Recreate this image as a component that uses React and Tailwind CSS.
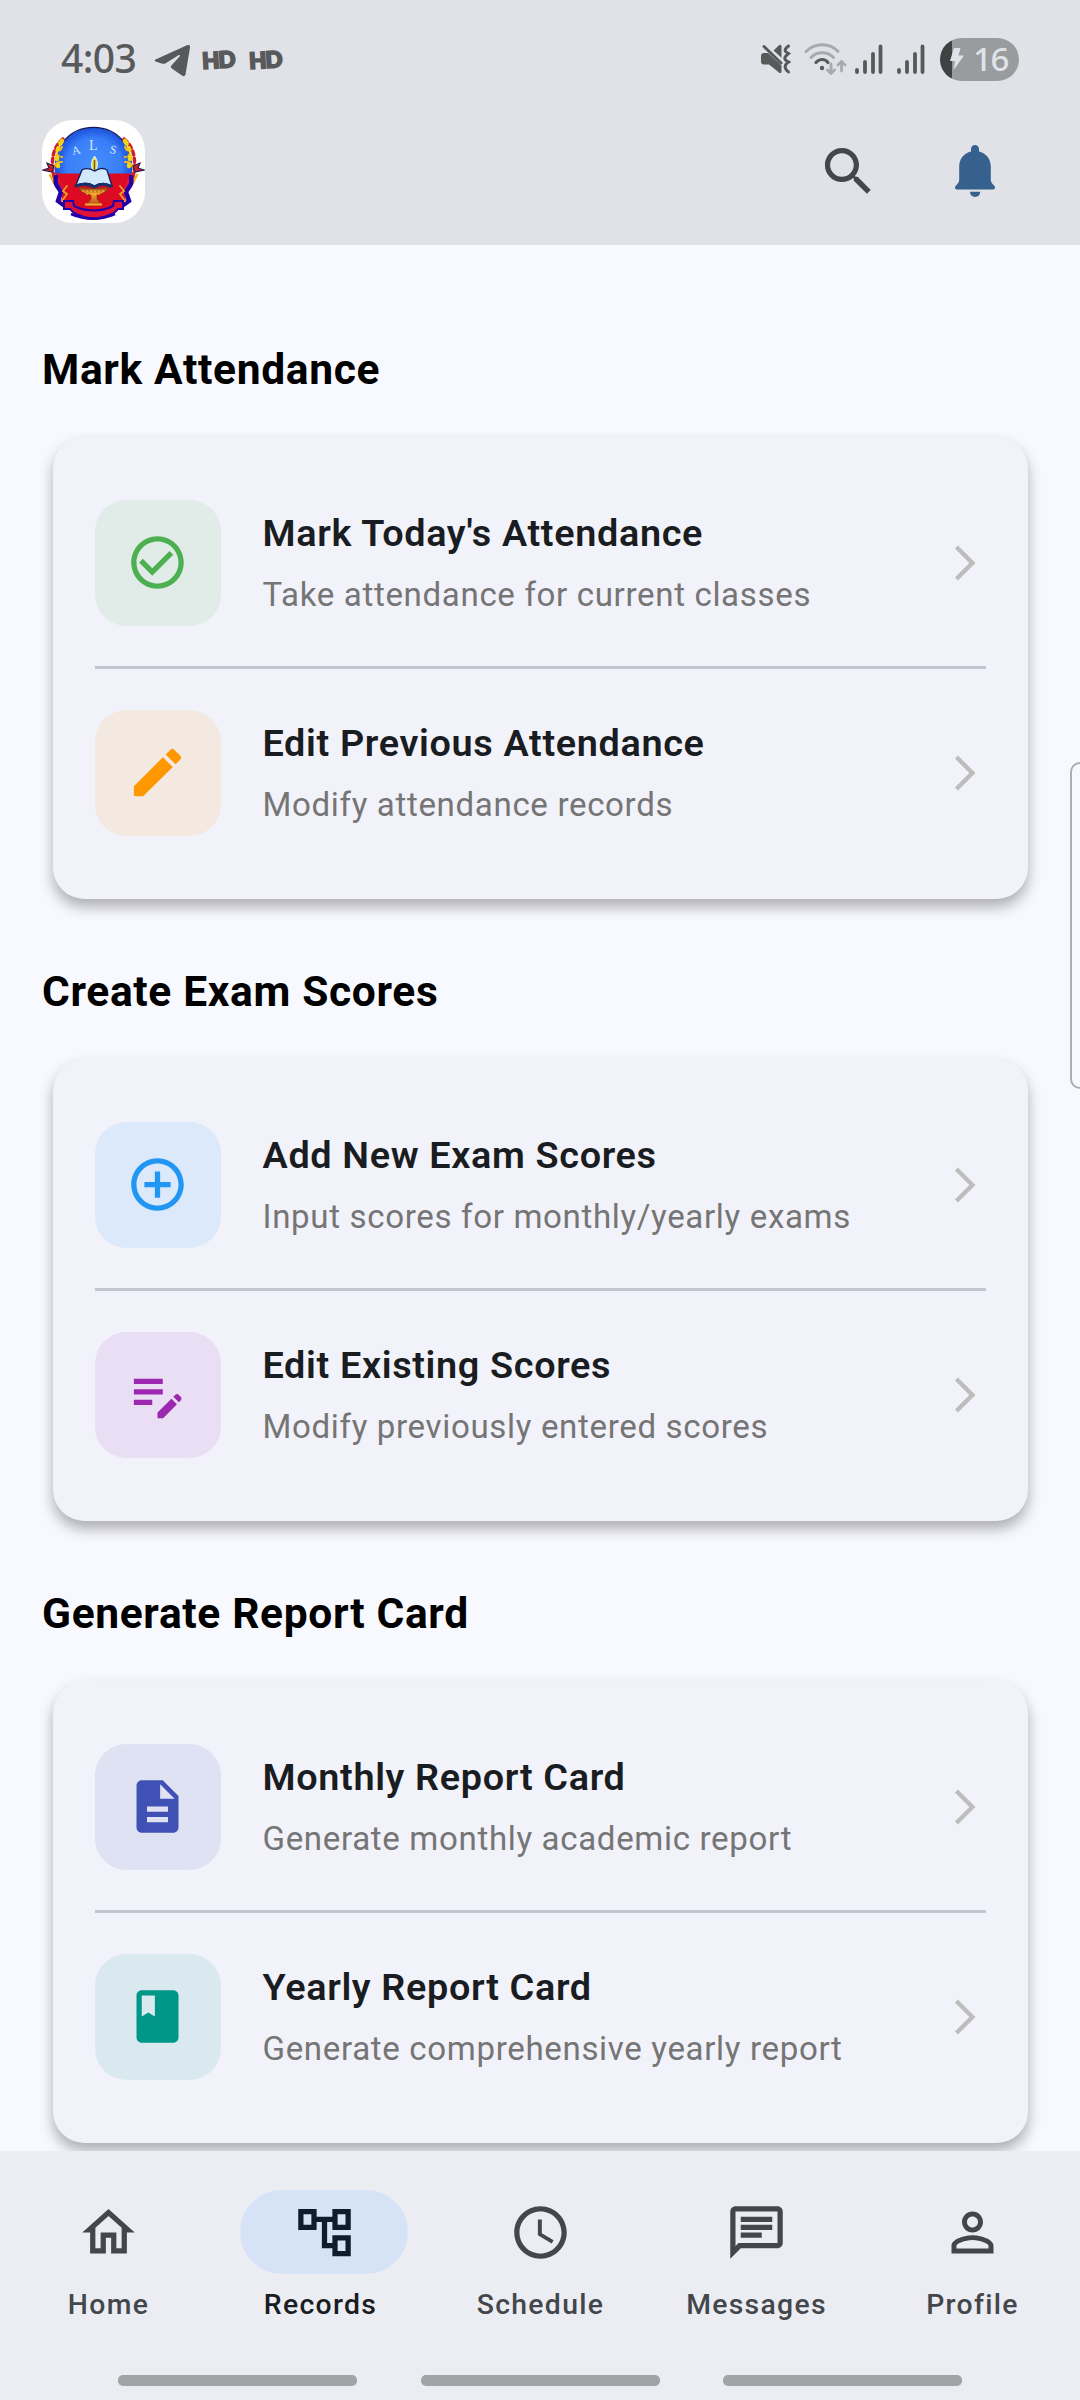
const FONT = "font-['Roboto','Liberation_Sans',sans-serif]";

const PATHS = {
  check:
    'M16.59 7.58 10 14.17l-3.59-3.58L5 12l5 5 8-8zM12 2C6.48 2 2 6.48 2 12s4.48 10 10 10 10-4.48 10-10S17.52 2 12 2m0 18c-4.42 0-8-3.58-8-8s3.58-8 8-8 8 3.58 8 8-3.58 8-8 8',
  pencil:
    'M3 17.46v3.04c0 .28.22.5.5.5h3.04L17.81 9.94l-3.75-3.75L3 17.25zM20.71 7.04c.39-.39.39-1.02 0-1.41l-2.34-2.34a.996.996 0 0 0-1.41 0l-1.83 1.83 3.75 3.75z',
  plus:
    'M13 7h-2v4H7v2h4v4h2v-4h4v-2h-4zm-1-5C6.48 2 2 6.48 2 12s4.48 10 10 10 10-4.48 10-10S17.52 2 12 2m0 18c-4.41 0-8-3.59-8-8s3.59-8 8-8 8 3.59 8 8-3.59 8-8 8',
  editNote:
    'M3 10h11v2H3zm0-2h11V6H3zm0 8h7v-2H3zm15.01-3.13.71-.71a.996.996 0 0 1 1.41 0l.71.71c.39.39.39 1.02 0 1.41l-.71.71zm-.71.71-5.3 5.3V21h2.12l5.3-5.3z',
  file:
    'M14 2H6c-1.1 0-1.99.9-1.99 2L4 20c0 1.1.89 2 1.99 2H18c1.1 0 2-.9 2-2V8zm2 16H8v-2h8zm0-4H8v-2h8zm-3-5V3.5L18.5 9z',
  book: 'M18 2H6c-1.1 0-2 .9-2 2v16c0 1.1.9 2 2 2h12c1.1 0 2-.9 2-2V4c0-1.1-.9-2-2-2M6 4h5v8l-2.5-1.5L6 12z',
  search:
    'M15.5 14h-.79l-.28-.27C15.41 12.59 16 11.11 16 9.5 16 5.91 13.09 3 9.5 3S3 5.91 3 9.5 5.91 16 9.5 16c1.61 0 3.09-.59 4.23-1.57l.27.28v.79l5 4.99L20.49 19zm-6 0C7.01 14 5 11.99 5 9.5S7.01 5 9.5 5 14 7.01 14 9.5 11.99 14 9.5 14',
  chevron: 'M6.23 20.23 8 22l10-10L8 2 6.23 3.77 14.46 12z',
  home: 'm12 5.69 5 4.5V18h-2v-6H9v6H7v-7.81zM12 3 2 12h3v8h6v-6h2v6h6v-8h3z',
  tree: 'M22 11V3h-7v3H9V3H2v8h7V8h2v10h4v3h7v-8h-7v3h-2V8h2v3zM7 9H4V5h3zm10 6h3v4h-3zm0-10h3v4h-3z',
  clock:
    'M11.99 2C6.47 2 2 6.48 2 12s4.47 10 9.99 10C17.52 22 22 17.52 22 12S17.52 2 11.99 2M12 20c-4.42 0-8-3.58-8-8s3.58-8 8-8 8 3.58 8 8-3.58 8-8 8m.5-13H11v6l5.25 3.15.75-1.23-4.5-2.67z',
  message:
    'M4 4h16v12H5.17L4 17.17zm0-2c-1.1 0-1.99.9-1.99 2L2 22l4-4h14c1.1 0 2-.9 2-2V4c0-1.1-.9-2-2-2zm2 10h8v2H6zm0-3h12v2H6zm0-3h12v2H6z',
  person:
    'M12 5.9c1.16 0 2.1.94 2.1 2.1s-.94 2.1-2.1 2.1S9.9 9.16 9.9 8s.94-2.1 2.1-2.1m0 9c2.97 0 6.1 1.46 6.1 2.1v1.1H5.9V17c0-.64 3.13-2.1 6.1-2.1M12 4C9.79 4 8 5.79 8 8s1.79 4 4 4 4-1.79 4-4-1.79-4-4-4m0 9c-2.67 0-8 1.34-8 4v3h16v-3c0-2.66-5.33-4-8-4',
};

function Icon({ name, className }) {
  return (
    <svg viewBox="0 0 24 24" fill="currentColor" className={className}>
      <path d={PATHS[name]} />
    </svg>
  );
}

const SECTIONS = [
  {
    title: 'Mark Attendance',
    rows: [
      { icon: 'check', tile: 'bg-[#e1ebe8] text-[#4caf50]', title: "Mark Today's Attendance", text: 'Take attendance for current classes' },
      { icon: 'pencil', tile: 'bg-[#f3e9e1] text-[#ff9800]', title: 'Edit Previous Attendance', text: 'Modify attendance records' },
    ],
  },
  {
    title: 'Create Exam Scores',
    rows: [
      { icon: 'plus', tile: 'bg-[#dce9fa] text-[#2196f3]', title: 'Add New Exam Scores', text: 'Input scores for monthly/yearly exams' },
      { icon: 'editNote', tile: 'bg-[#e9def3] text-[#9c27b0]', title: 'Edit Existing Scores', text: 'Modify previously entered scores' },
    ],
  },
  {
    title: 'Generate Report Card',
    rows: [
      { icon: 'file', tile: 'bg-[#dfe2f3] text-[#3f51b5]', title: 'Monthly Report Card', text: 'Generate monthly academic report' },
      { icon: 'book', tile: 'bg-[#dae9f0] text-[#009688]', title: 'Yearly Report Card', text: 'Generate comprehensive yearly report' },
    ],
  },
];

const TABS = [
  { icon: 'home', label: 'Home' },
  { icon: 'tree', label: 'Records', active: true },
  { icon: 'clock', label: 'Schedule' },
  { icon: 'message', label: 'Messages' },
  { icon: 'person', label: 'Profile' },
];

function Signal({ className }) {
  return (
    <svg viewBox="0 0 28 30" className={className} stroke="#58595b" strokeWidth="3.8" strokeLinecap="round">
      <path d="M2 26v2M10 18v10M18 10v18M25.5 2.5v25.5" />
    </svg>
  );
}

function HdBadge() {
  return (
    <span className="w-[35px] -rotate-3 font-['Lato',sans-serif] text-[22.5px] leading-none font-black tracking-[-1px] [-webkit-text-stroke:1.8px_#58595b]">
      HD
    </span>
  );
}

function StatusBar() {
  return (
    <div className="flex h-[98px] items-center pt-[20px] pr-[61px] pl-[61px] text-[#58595b]">
      <span className="mb-[4px] w-[78px] font-['Noto_Sans',sans-serif] text-[39px] leading-none font-medium tracking-[-0.6px]">4:03</span>
      <svg viewBox="0 0 36 33" className="mt-[3px] ml-[15px] h-[33px] w-[36px]" fill="#58595b">
        <path d="M1.5 15.5 33 1.2c2-.8 3.5.3 3 2.4L31.6 30c-.4 2.2-1.9 2.7-3.7 1.5l-10-7c-1.3-1-1.4-2.2-.3-3.3l8-8.8c.9-1.3-.2-1.9-1.5-1l-12 7.5c-1.8 1.1-3 1-4.5.5l-5.3-1.6c-2-.7-2-1.6-.8-2.3" />
      </svg>
      <div className="mt-[2px] ml-[12px] flex gap-[12px]">
        <HdBadge />
        <HdBadge />
      </div>

      <div className="ml-auto flex items-center">
        <svg viewBox="0 0 30 30" className="h-[30px] w-[30px]" fill="#58595b">
          <path d="M0 12a3 3 0 0 1 3-3h4l13.5 12.5v6c0 1.8-1.4 2-2.5 1L8 20.5H3a3 3 0 0 1-3-3z" />
          <path d="M12.5 6.5 18 1.3c1.2-1 2.5-.6 2.5 1v11.5z" />
          <path d="M3 2.5 20 19" stroke="#58595b" strokeWidth="3" strokeLinecap="round" />
          <path d="M27.5 2c-4.5 3.5-4.5 5 0 7.5-5 4-5 6 0 8.5-4.5 3-4.5 6 0 10" fill="none" stroke="#58595b" strokeWidth="3" strokeLinecap="round" />
        </svg>
        <svg viewBox="0 0 43 34" className="ml-[13px] h-[34px] w-[43px]" fill="none" strokeLinecap="round">
          <path d="M2 9.5C11 .5 26 .5 34 9.5" stroke="#a9aaae" strokeWidth="3" />
          <path d="M7 15.5c6-6.5 16.5-6.5 22.5 0" stroke="#a9aaae" strokeWidth="3" />
          <path d="M12 20.5c3.5-4 9-4 12 0" stroke="#58595b" strokeWidth="3.2" />
          <circle cx="18" cy="26" r="2.2" fill="#58595b" />
          <path d="M27 22v9.5m-3.5-3.5 3.5 3.5 3.5-3.5M37.5 29v-9.5M34 23l3.5-3.5L41 23" stroke="#a9aaae" strokeWidth="2.8" strokeLinejoin="round" />
        </svg>
        <Signal className="ml-[8px] h-[30px] w-[28px]" />
        <Signal className="ml-[14px] h-[30px] w-[28px]" />
        <div className="ml-[15px] flex h-[43px] w-[79px] items-center rounded-full bg-[linear-gradient(90deg,#404143_12px,#9a9b9f_12px)] text-[#e1e2e8]">
          <svg viewBox="0 0 14 22" className="ml-[10px] h-[22px] w-[14px] shrink-0" fill="currentColor">
            <path d="M4 0h6.5L8.5 7.5h5.500L3.500 22l1.500-9H0z" />
          </svg>
          <span className="mb-[2px] ml-[9px] font-['Noto_Sans',sans-serif] text-[33px] leading-none font-medium tracking-[-1.5px]">16</span>
        </div>
      </div>
    </div>
  );
}

function Garland() {
  return (
    <g strokeLinecap="round" fill="none">
      <path d="M21 19C12 26 8 38 12 57l8 13" stroke="#d01f2c" strokeWidth="3.5" strokeDasharray="4 3.5" />
      <path d="M20 21C15 28 14 38 16 46" stroke="#f3d316" strokeWidth="4.5" strokeDasharray="3 5" />
      <path d="M20 27l-4 7 4 3M17 42h3M8 55l4 8M14 44l-5 7" stroke="#f0b61c" strokeWidth="2.2" />
      <path d="M18 33l1 1" stroke="#2460d8" strokeWidth="4" />
      <path d="m1 50 6-2-2-5 7 3-2 6z" fill="#d01f2c" stroke="#2a1a4a" strokeWidth="1.2" />
      <path d="M14 57c-2 9 3 10 5 15l-3 9 7 5" stroke="#2400a8" strokeWidth="4.5" />
      <path d="M17 59c0 7 5 8 5 14l-2 8" stroke="#dc1440" strokeWidth="2" />
      <path d="m25 66-4 5 4 3-5 7 4 2" stroke="#f0a020" strokeWidth="1.8" />
    </g>
  );
}

function Logo() {
  return (
    <svg viewBox="0 0 103 103" className="h-[103px] w-[103px] rounded-[31px] bg-white">
      <defs>
        <radialGradient id="sky" gradientUnits="userSpaceOnUse" cx="52" cy="46" r="39">
          <stop offset="0" stopColor="#448ffb" />
          <stop offset="0.7" stopColor="#3a7ef8" />
          <stop offset="1" stopColor="#1a50da" />
        </radialGradient>
        <linearGradient id="bowl" x2="0" y2="1">
          <stop offset="0" stopColor="#8c3a10" />
          <stop offset="0.4" stopColor="#f4a62a" />
          <stop offset="1" stopColor="#b5461a" />
        </linearGradient>
        <clipPath id="disc">
          <circle cx="51.5" cy="46.5" r="39" />
        </clipPath>
      </defs>
      <path d="M17 54h69v8l-4 24-30 9-30-9-5-24z" fill="#dc0a22" />
      <g clipPath="url(#disc)">
        <rect width="103" height="54" fill="url(#sky)" />
        <rect y="53.5" width="103" height="50" fill="#dc0a22" />
      </g>
      <path d="M21 22a39 39 0 0 1 61 0" fill="none" stroke="#14185e" strokeWidth="1.3" />
      <g className="font-['Liberation_Serif',serif]" fill="#d4e6ff">
        <text x="29.5" y="34.5" fontSize="12" transform="rotate(-14 33 30)">A</text>
        <text x="47" y="30" fontSize="14">L</text>
        <text x="68" y="33.5" fontSize="12" transform="rotate(14 71 29)">S</text>
      </g>
      <path d="M52.5 36c4 6 3 8 2 14h-4c-2-6-1-9 2-14" fill="#e8e24a" stroke="#dff0ff" strokeWidth="1" />
      <path d="M52.5 40v10" stroke="#7a5a10" strokeWidth="1.5" />
      <path d="M40 50c5-3 9-1 12.5 1 4-2 8-4 12.5-1l5 16c-6-3-12-4-17.5 0-6-4-13-3-19 0z" fill="#d2e9fc" stroke="#15205e" strokeWidth="1.4" />
      <path d="M34 66c7-3 13-2 18.5 1 5-3 11-4 17 0" fill="none" stroke="#15306e" strokeWidth="3" />
      <path d="M37 67c10 2 20 2 29 0-1 5-6 7-11 8v4l5 6H44l5-6v-4c-6-1-11-3-12-8" fill="url(#bowl)" stroke="#8a3510" strokeWidth="0.8" />
      <path d="M43 84.5h17" stroke="#f0b030" strokeWidth="1.8" />
      <path d="M40 71h24M44 74h16" stroke="#f8c040" strokeWidth="1.2" strokeDasharray="2 2" />
      <Garland />
      <g transform="translate(103 0) scale(-1 1)">
        <Garland />
      </g>
      <path d="M22 81h9l1 5c12 6 28 6 39 0l1-5h9v8h-5l-4 4c-13 7-27 7-40 0l-4-4h-6z" fill="#e01238" stroke="#2400a8" strokeWidth="2" />
      <path d="M29 94c14 6 30 6 44 0" fill="none" stroke="#2400a8" strokeWidth="2.6" />
    </svg>
  );
}

function AppBar() {
  return (
    <div className="flex h-[147px] items-center pr-[85px] pl-[42px]">
      <Logo />
      <Icon name="search" className="ml-auto h-[63px] w-[63px] text-[#43474b]" />
      <svg viewBox="0 0 40 53" className="ml-[75px] h-[53px] w-[40px]" fill="#36618e">
        <path d="M20 0c2.300 0 4 1.700 4 4v2.500c7 1.500 11.800 7.500 11.800 15V35c0 2 .8 3 3 5.200 2.200 2.300 1.200 4.300-1 4.300H2.200c-2.200 0-3.200-2-1-4.300 2.200-2.200 3-3.200 3-5.200V21.500c0-7.500 4.800-13.500 11.800-15V4c0-2.300 1.700-4 4-4" />
        <path d="M15 46.800h10.200c0 3-2.200 5.200-5.100 5.200S15 49.800 15 46.800" />
      </svg>
    </div>
  );
}

function Row({ icon, tile, title, text }) {
  return (
    <div className="flex h-[168px] items-center">
      <div className={`flex h-[126px] w-[126px] shrink-0 items-center justify-center rounded-[31.5px] ${tile}`}>
        <Icon name={icon} className="h-[63px] w-[63px]" />
      </div>
      <div className="mb-[1px] ml-[42px] flex-1 whitespace-nowrap">
        <p className="text-[37.8px] leading-[55px] font-semibold tracking-[0.656px] text-[#191c20]">{title}</p>
        <p className="mt-[9.5px] text-[33.075px] leading-[47px] tracking-[0.656px] text-[#757575]">{text}</p>
      </div>
      <Icon name="chevron" className="h-[42px] w-[42px] text-[#bdbdbd]" />
    </div>
  );
}

function Section({ title, rows }) {
  return (
    <section className="h-[622px] pt-[6px]">
      <h2 className="px-[42px] text-[42.525px] leading-[63px] font-bold tracking-[0.656px] text-black">{title}</h2>
      <div className="mx-[52.5px] mt-[35.6px] h-[462px] rounded-[31.5px] bg-[#f2f2fa] px-[42px] pt-[42px] shadow-[0_8px_14px_rgba(0,0,0,0.3)]">
        <Row {...rows[0]} />
        <div className="flex h-[42px] items-center">
          <div className="h-[2.6px] w-full bg-[#c3c6cf]" />
        </div>
        <Row {...rows[1]} />
      </div>
    </section>
  );
}

function BottomNav() {
  return (
    <nav className="z-10 flex h-[249px] flex-col bg-[#ecedf3]">
      <div className="grid grid-cols-5 pt-[39px]">
        {TABS.map((t) => (
          <div key={t.label} className={`flex flex-col items-center ${t.active ? 'text-[#0f1c2b]' : 'text-[#43474b]'}`}>
            <div className={`flex h-[84px] w-[168px] items-center justify-center rounded-full ${t.active ? 'bg-[#d6e3f7]' : ''}`}>
              <Icon name={t.icon} className="h-[63px] w-[63px]" />
            </div>
            <span
              className={`mt-[12px] text-[28.35px] leading-[38px] font-medium tracking-[1.31px] ${t.active ? 'mr-[7px] text-[#191c20]' : 'ml-[1px]'}`}
            >
              {t.label}
            </span>
          </div>
        ))}
      </div>
      <div className="mt-auto mb-[14px] flex justify-between pr-[118px] pl-[118px]">
        <div className="h-[11px] w-[239px] rounded-[5px] bg-[#a2a3a7]" />
        <div className="h-[11px] w-[239px] rounded-[5px] bg-[#a2a3a7]" />
        <div className="h-[11px] w-[239px] rounded-[5px] bg-[#a2a3a7]" />
      </div>
    </nav>
  );
}

export default function App() {
  return (
    <div className={`relative flex h-[2400px] w-[1080px] flex-col overflow-hidden bg-[#f8f9ff] ${FONT}`}>
      <header className="h-[245px] shrink-0 bg-[#e1e2e7]">
        <StatusBar />
        <AppBar />
      </header>
      <main className="h-[1906px] shrink-0 overflow-hidden pt-[87px]">
        {SECTIONS.map((s) => (
          <Section key={s.title} {...s} />
        ))}
      </main>
      <BottomNav />
      <div className="absolute top-[762px] -right-[10px] h-[327px] w-[20px] rounded-[10px] border-2 border-[#adaeb1] bg-[#f8f9ff]" />
    </div>
  );
}
